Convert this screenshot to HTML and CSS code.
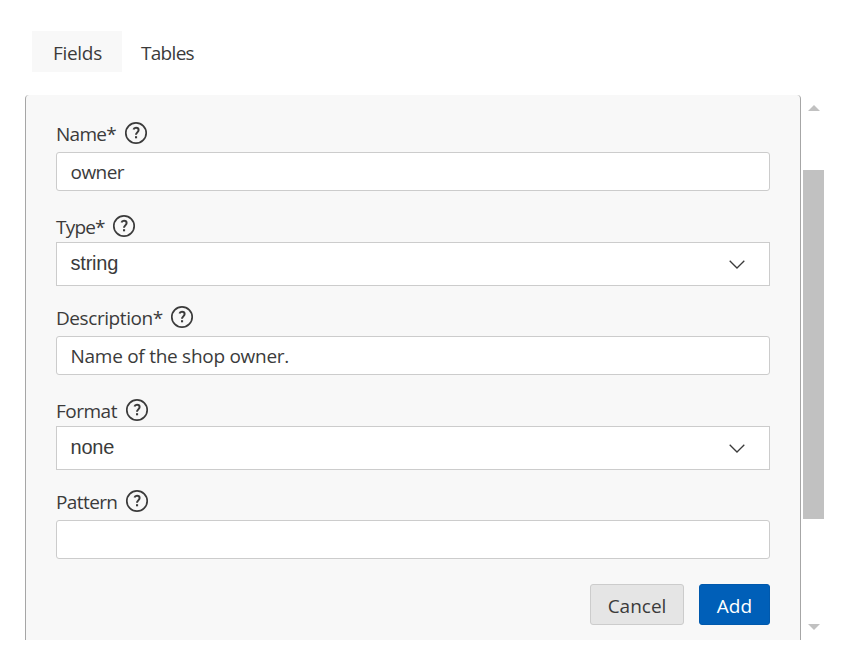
FILE: index.html
```html
<!DOCTYPE html>
<html lang="en">
<head>
<meta charset="utf-8">
<title>Fields</title>
<link rel="stylesheet" href="styles.css">
</head>
<body>
<svg width="0" height="0" class="defs">
  <symbol id="help" viewBox="0 0 24 24">
    <circle cx="12" cy="12" r="10.2" fill="none" stroke="currentColor" stroke-width="1.7"/>
    <path d="M9.5 8.6c.3-1.1 1.2-1.8 2.5-1.8 1.6 0 2.6.9 2.6 2.3 0 2.2-2.6 2.4-2.6 4.7" fill="none" stroke="currentColor" stroke-width="2"/>
    <rect x="11" y="15.2" width="2.1" height="2.1" fill="currentColor"/>
  </symbol>
  <symbol id="chevron" viewBox="0 0 16 9">
    <path d="M.7.8 8 8 15.3.8" fill="none" stroke="currentColor" stroke-width="1.3"/>
  </symbol>
</svg>
<nav class="tabs">
  <a class="tab active"><span class="w-fields">Fields</span></a>
  <a class="tab"><span class="w-tables">Tables</span></a>
</nav>
<main class="viewport">
  <form class="panel">
    <div class="field">
      <div class="label"><span class="w-name">Name*</span><svg class="help"><use href="#help"/></svg></div>
      <div class="input"><span class="w-owner">owner</span></div>
    </div>
    <div class="field select-field">
      <div class="label"><span class="w-type">Type*</span><svg class="help"><use href="#help"/></svg></div>
      <div class="select"><span>string</span><svg class="chevron"><use href="#chevron"/></svg></div>
    </div>
    <div class="field">
      <div class="label"><span class="w-description">Description*</span><svg class="help"><use href="#help"/></svg></div>
      <div class="input"><span class="w-value">Name of the shop owner.</span></div>
    </div>
    <div class="field select-field">
      <div class="label"><span class="w-format">Format</span><svg class="help"><use href="#help"/></svg></div>
      <div class="select"><span>none</span><svg class="chevron"><use href="#chevron"/></svg></div>
    </div>
    <div class="field">
      <div class="label"><span class="w-pattern">Pattern</span><svg class="help"><use href="#help"/></svg></div>
      <div class="input"></div>
    </div>
    <div class="actions">
      <div class="button cancel"><span>Cancel</span></div>
      <div class="button add"><span>Add</span></div>
    </div>
  </form>
  <div class="scrollbar">
    <svg class="arrow" viewBox="0 0 12 6"><path d="M0 6 6 0l6 6z"/></svg>
    <div class="thumb"></div>
    <svg class="arrow" viewBox="0 0 12 6"><path d="M0 0h12L6 6z"/></svg>
  </div>
</main>
</body>
</html>
```
FILE: styles.css
```css
* { box-sizing: border-box; }
body {
  margin: 0;
  background: #fff;
  color: #3b3b3b;
  font: 19px/26px "Open Sans", "Noto Sans", sans-serif;
  white-space: nowrap;
  overflow: hidden;
}
svg { display: block; flex: none; }
.defs { position: absolute; }
.tabs { display: flex; height: 95px; padding: 31px 0 0 32px; }
.tab { width: 90px; height: 41px; padding: 9px 0 0 21px; }
.tab + .tab { padding-left: 19px; }
.active { background: #f8f8f8; }
.viewport { display: flex; height: 545px; margin-left: 25px; overflow: hidden; }
.panel {
  width: 776px;
  height: 560px;
  padding: 7px 30px 0;
  background: #f8f8f8;
  border: solid #a6a6a6;
  border-width: 0 1px;
  border-radius: 4px 4px 0 0;
}
.field { padding-top: 15px; }
.select-field { padding-top: 19px; }
.label { display: flex; gap: 7.6px; height: 32px; padding-top: 4px; }
.help { width: 24px; height: 24px; }
.input, .select {
  display: flex;
  align-items: center;
  padding: 0 13.5px;
  background: #fff;
  border: 1px solid #ccc;
}
.input { height: 39px; margin-top: 3px; border-radius: 3px; }
.select {
  height: 44px;
  justify-content: space-between;
  padding-right: 24px;
  padding-bottom: 3px;
  font-family: "Liberation Sans", sans-serif;
  font-size: 20px;
  letter-spacing: -.2px;
}
.chevron { width: 16px; height: 9px; margin-top: 4px; }

/* Tracking per string */
.w-fields { letter-spacing: -.3px; }
.w-tables { letter-spacing: -.7px; }
.w-name { letter-spacing: -.7px; }
.w-owner { letter-spacing: -.55px; }
.w-type { letter-spacing: -.8px; }
.w-description { letter-spacing: -.43px; }
.w-value { letter-spacing: -.27px; }
.w-format { letter-spacing: -.5px; }
.w-pattern { letter-spacing: -.6px; }

.actions { display: flex; justify-content: flex-end; gap: 15px; padding-top: 25px; }
.button {
  display: flex;
  align-items: center;
  justify-content: center;
  height: 41px;
  padding-top: 3px;
  border: 1px solid #ccc;
  border-radius: 3px;
}
.cancel { width: 94px; background: #e5e5e5; }
.add { width: 71px; background: #005fb8; border-color: #0059ad; color: #fff; }
.scrollbar {
  display: flex;
  flex-direction: column;
  align-items: center;
  width: 21px;
  margin-left: 2px;
  padding-top: 10px;
}
.arrow { width: 12px; height: 6px; fill: #c1c1c1; }
.thumb { width: 21px; height: 349px; margin: 59px 0 105px; background: #c1c1c1; }
```
